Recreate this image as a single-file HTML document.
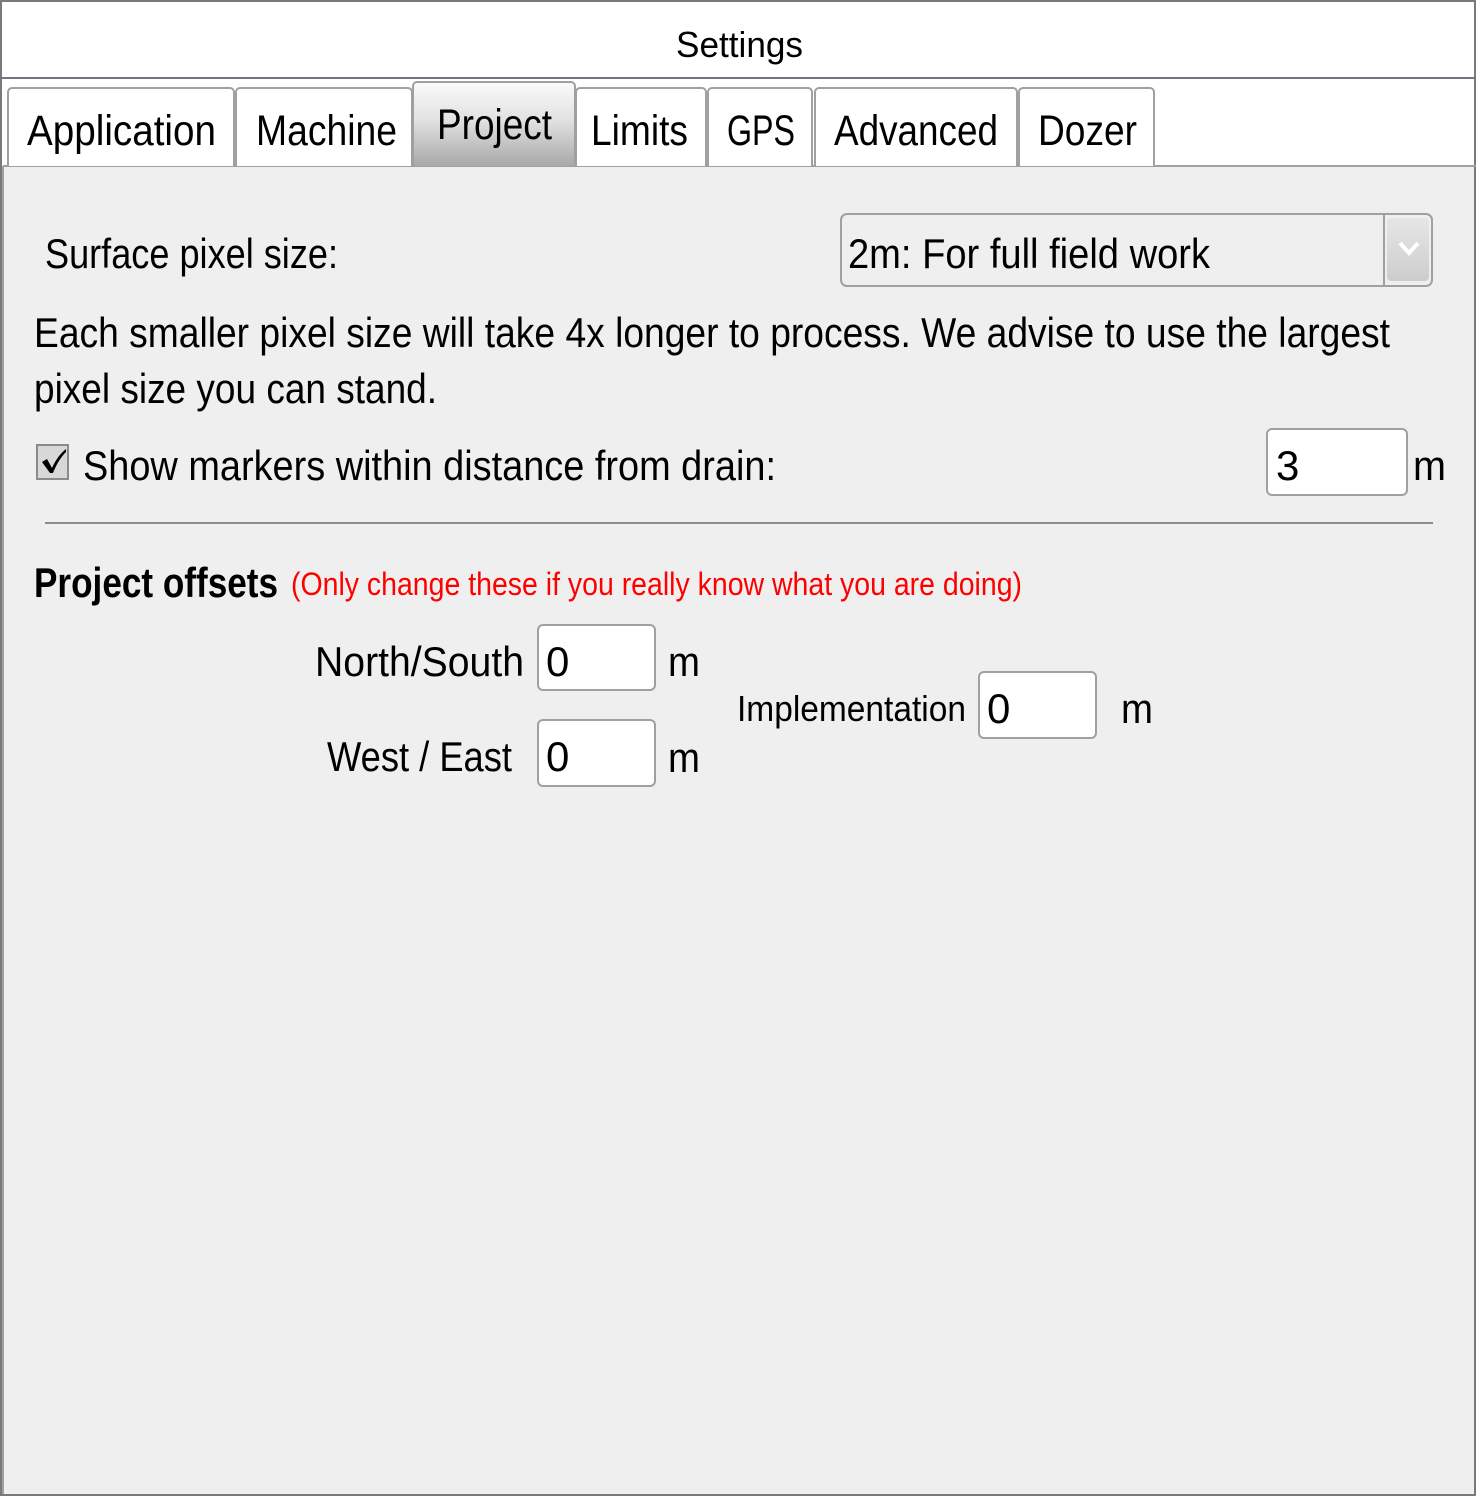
<!DOCTYPE html>
<html><head><meta charset="utf-8"><style>
html,body{margin:0;padding:0;background:#fff;}
svg{display:block;font-family:"Liberation Sans",sans-serif;}
</style></head><body>
<svg width="1476" height="1496" viewBox="0 0 1476 1496" xmlns="http://www.w3.org/2000/svg">
<defs>
<linearGradient id="pg" x1="0" y1="0" x2="0" y2="1"><stop offset="0" stop-color="#fafafa"/><stop offset="0.45" stop-color="#e2e2e2"/><stop offset="1" stop-color="#a8a8a8"/></linearGradient>
<linearGradient id="bg" x1="0" y1="0" x2="0" y2="1"><stop offset="0" stop-color="#e6e6e6"/><stop offset="1" stop-color="#cdcdcd"/></linearGradient>
</defs>
<rect x="0" y="0" width="1476" height="1496" fill="#fff"/>
<rect x="1" y="1" width="1474" height="1494" fill="none" stroke="#7a7a7a" stroke-width="2"/>
<line x1="0" y1="78" x2="1476" y2="78" stroke="#6f7880" stroke-width="2"/>
<text x="676" y="57" font-size="36" textLength="127" lengthAdjust="spacingAndGlyphs">Settings</text>
<!-- content -->
<rect x="3" y="166" width="1471" height="1328" fill="#efefef"/>
<line x1="3" y1="166" x2="1476" y2="166" stroke="#a0a0a0" stroke-width="2"/>
<line x1="3" y1="166" x2="3" y2="1494" stroke="#a0a0a0" stroke-width="2"/>
<!-- tabs -->
<g stroke="#a0a0a0" stroke-width="2" fill="#fff">
<path d="M8 166V92a4 4 0 0 1 4-4H230a4 4 0 0 1 4 4V166"/>
<path d="M236 166V92a4 4 0 0 1 4-4H408a4 4 0 0 1 4 4V166"/>
<path d="M576 166V92a4 4 0 0 1 4-4H702a4 4 0 0 1 4 4V166"/>
<path d="M708 166V92a4 4 0 0 1 4-4H808a4 4 0 0 1 4 4V166"/>
<path d="M815 166V92a4 4 0 0 1 4-4H1013a4 4 0 0 1 4 4V166"/>
<path d="M1019 166V92a4 4 0 0 1 4-4H1150a4 4 0 0 1 4 4V166"/>
<path d="M413 166V86a4 4 0 0 1 4-4H571a4 4 0 0 1 4 4V166" fill="url(#pg)"/>
</g>
<g font-size="43">
<text x="27" y="145" textLength="189" lengthAdjust="spacingAndGlyphs">Application</text>
<text x="256" y="145" textLength="141" lengthAdjust="spacingAndGlyphs">Machine</text>
<text x="437" y="139" textLength="115" lengthAdjust="spacingAndGlyphs">Project</text>
<text x="591" y="145" textLength="97" lengthAdjust="spacingAndGlyphs">Limits</text>
<text x="727" y="145" textLength="68" lengthAdjust="spacingAndGlyphs">GPS</text>
<text x="834" y="145" textLength="164" lengthAdjust="spacingAndGlyphs">Advanced</text>
<text x="1038" y="145" textLength="99" lengthAdjust="spacingAndGlyphs">Dozer</text>
</g>
<!-- surface pixel size -->
<g font-size="42">
<text x="45" y="268" textLength="293" lengthAdjust="spacingAndGlyphs">Surface pixel size:</text>
<text x="34" y="347" textLength="1356" lengthAdjust="spacingAndGlyphs">Each smaller pixel size will take 4x longer to process. We advise to use the largest</text>
<text x="34" y="403" textLength="403" lengthAdjust="spacingAndGlyphs">pixel size you can stand.</text>
<text x="83" y="480" textLength="693" lengthAdjust="spacingAndGlyphs">Show markers within distance from drain:</text>
</g>
<rect x="841" y="214" width="591" height="72" rx="6" fill="#efefef" stroke="#a0a0a0" stroke-width="2"/>
<line x1="1384" y1="215" x2="1384" y2="285" stroke="#a0a0a0" stroke-width="2"/>
<rect x="1387" y="218" width="42" height="63" rx="4" fill="url(#bg)"/>
<path d="M1400 243l9 10 9-10" fill="none" stroke="#fff" stroke-width="4"/>
<text x="848" y="268" font-size="42" textLength="362" lengthAdjust="spacingAndGlyphs">2m: For full field work</text>
<!-- checkbox -->
<rect x="37" y="445" width="31" height="34" fill="#d8d8d8" stroke="#8a8a8a" stroke-width="2"/>
<path d="M42 462l5-3 5 9c4-9 9-15 14-19l0 3c-5 5-9 11-13 21h-3z" fill="#000"/>
<rect x="1267" y="429" width="140" height="66" rx="5" fill="#fff" stroke="#a0a0a0" stroke-width="2"/>
<text x="1276" y="480" font-size="42">3</text>
<text x="1413" y="480" font-size="42" textLength="33" lengthAdjust="spacingAndGlyphs">m</text>
<line x1="45" y1="523" x2="1433" y2="523" stroke="#8c8c8c" stroke-width="2"/>
<!-- offsets -->
<text x="34" y="597" font-size="42" font-weight="bold" textLength="244" lengthAdjust="spacingAndGlyphs">Project offsets</text>
<text x="291" y="595" font-size="32" fill="#ff0000" textLength="731" lengthAdjust="spacingAndGlyphs">(Only change these if you really know what you are doing)</text>
<g font-size="42">
<text x="315" y="676" textLength="209" lengthAdjust="spacingAndGlyphs">North/South</text>
<text x="327" y="771" textLength="185" lengthAdjust="spacingAndGlyphs">West / East</text>
<text x="668" y="676" textLength="32" lengthAdjust="spacingAndGlyphs">m</text>
<text x="668" y="772" textLength="32" lengthAdjust="spacingAndGlyphs">m</text>
<text x="1121" y="723" textLength="32" lengthAdjust="spacingAndGlyphs">m</text>
</g>
<text x="737" y="721" font-size="36" textLength="229" lengthAdjust="spacingAndGlyphs">Implementation</text>
<g fill="#fff" stroke="#a0a0a0" stroke-width="2">
<rect x="538" y="625" width="117" height="65" rx="5"/>
<rect x="538" y="720" width="117" height="66" rx="5"/>
<rect x="979" y="672" width="117" height="66" rx="5"/>
</g>
<g font-size="42">
<text x="546" y="676">0</text>
<text x="546" y="771">0</text>
<text x="987" y="723">0</text>
</g>
</svg>
</body></html>
